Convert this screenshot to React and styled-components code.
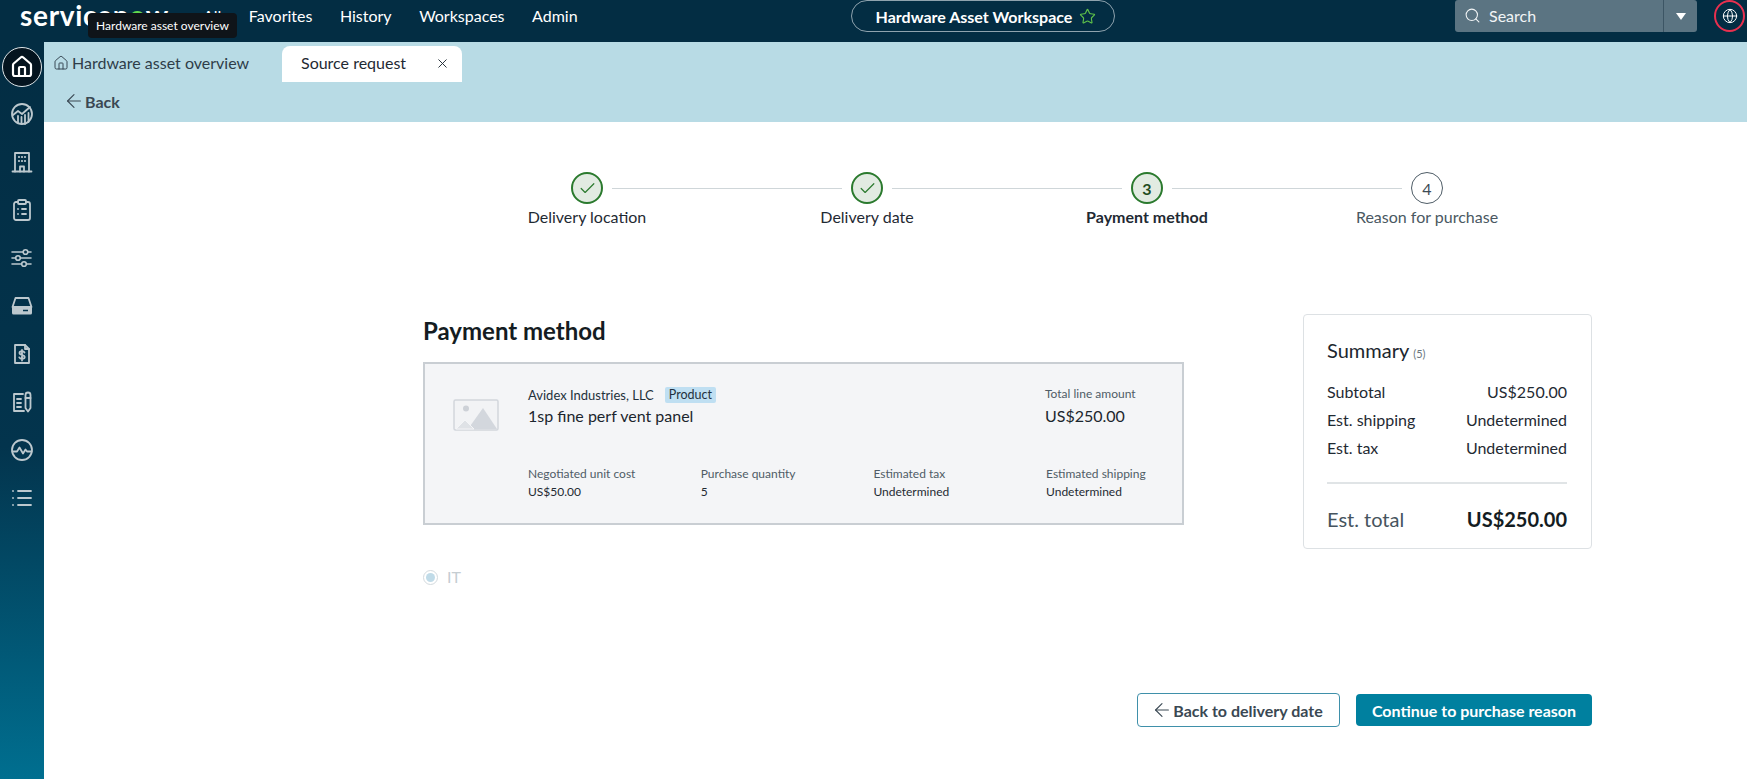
import React from 'react';
import styled, { createGlobalStyle } from 'styled-components';
import { House, ClipboardList, Search, Globe, Star, X, ArrowLeft, Check, List } from 'lucide-react';

const Global = createGlobalStyle`
  html, body { margin: 0; padding: 0; background: #fff; }
  body { font-family: Lato, "Open Sans", sans-serif; color: #1f2a33; overflow: hidden; }
  * { box-sizing: border-box; }
`;

const Page = styled.div`display: flex; flex-direction: column; width: 1747px; height: 779px; overflow: hidden;`;

const TopBar = styled.header`display: flex; align-items: flex-start; height: 42px; background: #032d43; color: #fff; position: relative; flex: none;`;
const LeftGroup = styled.div`display: flex; align-items: center; width: 851px; height: 32px; padding-left: 20px;`;
const Logo = styled.div`font: 700 28px/32px Lato, sans-serif; letter-spacing: 0.7px; width: 183px; flex: none; white-space: nowrap; margin-top: -3px;`;
const Green = styled.span`color: #62d84e;`;
const Nav = styled.nav`display: flex; gap: 27.5px; font-size: 16px; margin-top: -1px;`;
const NavItem = styled.span`white-space: nowrap;`;
const Tooltip = styled.div`position: absolute; left: 88px; top: 13px; width: 149px; height: 25px; background: #0f1419; color: #fff; border-radius: 4px; font-size: 12px; line-height: 25px; text-align: center; white-space: nowrap;`;
const Pill = styled.div`display: flex; align-items: center; justify-content: center; gap: 7px; width: 264px; height: 32px; padding-left: 6px; border: 1px solid #8fa3ae; border-radius: 16px; font-size: 16px; font-weight: 700; flex: none;`;
const Spacer = styled.div`flex: 1;`;
const SearchBox = styled.div`display: flex; width: 242px; height: 32px; background: #5b7482; border-radius: 3px; flex: none;`;
const SearchField = styled.div`display: flex; align-items: center; gap: 8px; flex: 1; padding: 0 0 2px 9px; font-size: 16px; color: #f2f5f6;`;
const SearchCaret = styled.div`display: flex; align-items: center; justify-content: center; width: 34px; border-left: 1px solid #3c5564;`;
const Caret = styled.span`width: 0; height: 0; border-left: 5.5px solid transparent; border-right: 5.5px solid transparent; border-top: 7px solid #fff;`;
const GlobeRing = styled.div`display: flex; align-items: center; justify-content: center; width: 31px; height: 32px; margin: 0 2px 0 17px; border: 2px solid #e8304f; border-radius: 50%; flex: none;`;

const Body = styled.div`display: flex; flex: 1; min-height: 0;`;
const Sidebar = styled.aside`display: flex; flex-direction: column; align-items: center; width: 44px; padding-top: 4px; background: linear-gradient(180deg, #032d43 0%, #03344d 55%, #006f90 100%); flex: none;`;
const RailItem = styled.div`display: flex; align-items: center; justify-content: center; width: 40px; height: 40px; margin-bottom: 8px; color: #bcc8ce; border-radius: 50%;
  ${p => p.$active && 'background: #04141f; border: 1px solid #dfe6e9; color: #fff; margin-top: 1px; margin-bottom: 7px;'}
`;

const Main = styled.main`display: flex; flex-direction: column; flex: 1; min-width: 0;`;
const SubHeader = styled.div`display: flex; flex-direction: column; height: 80px; background: #b8dbe5; flex: none; padding-top: 4px;`;
const TabRow = styled.div`display: flex; align-items: stretch; height: 36px; padding-left: 9px; color: #2e3d49; font-size: 16px; line-height: 20px;`;
const HomeTab = styled.div`display: flex; align-items: center; gap: 3px; width: 229px; flex: none; padding-bottom: 2px;`;
const ActiveTab = styled.div`display: flex; align-items: center; justify-content: space-between; width: 180px; padding: 0 12px 2px 19px; background: #fff; border-radius: 8px 8px 0 0; color: #1f2a33;`;
const BackLink = styled.div`display: flex; align-items: center; gap: 0; height: 38px; padding-left: 19px; font-size: 16px; font-weight: 700; color: #3a4853;`;

const Content = styled.div`display: flex; flex-direction: column; width: 1169px; margin-left: 379px;`;
const Stepper = styled.div`display: grid; grid-template-columns: repeat(4, 280px); margin: 50px 0 0 24px; width: 1120px;`;
const Step = styled.div`display: flex; flex-direction: column; align-items: center; white-space: nowrap;`;
const StepTrack = styled.div`display: grid; grid-template-columns: 1fr 32px 1fr; align-items: center; width: 100%; height: 32px; margin-bottom: 2px;`;
const Connector = styled.span`height: 1px; background: ${p => (p.$hidden ? 'transparent' : '#cfd6d9')}; ${p => p.$in ? 'margin-right: 9px;' : 'margin-left: 9px;'}`;
const StepCircle = styled.div`display: flex; align-items: center; justify-content: center; width: 32px; height: 32px; border-radius: 50%; font-size: 16px;
  border: ${p => (p.$state === 'todo' ? '1px solid #4f5d67' : '2px solid #2b7a2e')};
  background: ${p => (p.$state === 'todo' ? '#fff' : '#e2ebe2')};
  color: ${p => (p.$state === 'todo' ? '#3e4b55' : '#1f4d22')};
  font-weight: ${p => (p.$state === 'current' ? 700 : 400)};
`;
const StepLabel = styled.div`font-size: 16px; line-height: 22px; color: ${p => (p.$state === 'todo' ? '#4a5862' : '#1f2a33')}; font-weight: ${p => (p.$state === 'current' ? 700 : 400)};`;

const Columns = styled.div`display: grid; grid-template-columns: 761px 289px; justify-content: space-between; margin-top: 87px;`;
const Heading = styled.h1`margin: 0 0 15px; font-size: 24px; line-height: 32px; font-weight: 700; color: #141c22;`;
const Card = styled.section`display: flex; flex-direction: column; height: 163px; background: #f4f5f7; border: 2px solid #c9ced3; padding: 21px 0 0 103px; position: relative;`;
const PlaceholderWrap = styled.div`position: absolute; left: 28px; top: 35px;`;
const CardTop = styled.div`display: flex; justify-content: space-between; padding-right: 29px; height: 67px;`;
const VendorLine = styled.div`display: flex; align-items: center; gap: 11px; font-size: 13px; line-height: 20px; color: #24313b;`;
const Badge = styled.span`display: inline-block; height: 16px; padding: 0 4px; background: #bfdff2; border-radius: 2px; font-size: 12.5px; line-height: 16px; color: #1f3140;`;
const ProductName = styled.div`font-size: 16px; line-height: 22px; color: #1c262e;`;
const Total = styled.div`display: flex; flex-direction: column; width: 108px;`;
const MetaLabel = styled.div`font-size: 12px; line-height: 18px; color: #4f5c66; white-space: nowrap;`;
const TotalValue = styled.div`font-size: 16px; line-height: 24px; color: #1c262e; margin-top: 1px;`;
const MetaGrid = styled.div`display: grid; grid-template-columns: repeat(4, 172.7px); margin-top: 13px;`;
const Meta = styled.div`display: flex; flex-direction: column;`;
const MetaValue = styled.div`font-size: 12px; line-height: 18px; color: #1f2a33;`;

const RadioRow = styled.div`display: flex; align-items: center; gap: 9px; margin-top: 42px; color: #c5cdd2; font-size: 16px; line-height: 20px;`;
const Radio = styled.span`display: flex; align-items: center; justify-content: center; width: 15px; height: 15px; border: 1px solid #d3dade; border-radius: 50%;
  &::after { content: ''; width: 9px; height: 9px; border-radius: 50%; background: #c0dbe8; }
`;

const Summary = styled.aside`height: 235px; margin-top: -1px; border: 1px solid #dde1e4; border-radius: 4px; padding: 22px 24px 0 23px; background: #fff;`;
const SummaryTitle = styled.div`font-size: 20px; line-height: 26px; color: #1c262e; margin-bottom: 11px;`;
const Count = styled.small`font-size: 11px; color: #6a7780; margin-left: 4px;`;
const SumRow = styled.div`display: flex; justify-content: space-between; font-size: 16px; line-height: 28px; color: #1f2a33;`;
const Divider = styled.hr`border: 0; height: 2px; background: #e0e4e6; margin: 20px 0 21px;`;
const TotalRow = styled.div`display: flex; justify-content: space-between; align-items: center; font-size: 20px; line-height: 28px;`;
const TotalLabel = styled.span`color: #46545e;`;
const TotalAmount = styled.strong`font-weight: 700; color: #141c22;`;

const Actions = styled.div`display: flex; justify-content: flex-end; align-items: center; gap: 16px; margin-top: 106px;`;
const BackButton = styled.button`display: flex; align-items: center; justify-content: center; gap: 0; width: 203px; height: 34px; background: #fff; border: 1px solid #3f90aa; border-radius: 4px; font: 700 16px Lato, sans-serif; color: #3a4853; padding: 0 3px 0 0;`;
const PrimaryButton = styled.button`width: 236px; height: 32px; background: #00809f; border: 0; border-radius: 4px; font: 700 16px Lato, sans-serif; color: #fff; padding: 0;`;

const Svg = ({ children, size = 24, sw = 1.8 }) => (
  <svg width={size} height={size} viewBox="0 0 24 24" fill="none" stroke="currentColor" strokeWidth={sw} strokeLinecap="round" strokeLinejoin="round">{children}</svg>
);
const ChartCircle = () => (
  <Svg><circle cx="12" cy="12" r="10" /><path d="M3 13l5-4 4 3 8-7" /><path d="M8 21v-7M11.500 22v-7M15 22v-9M18.500 20v-9" /></Svg>
);
const Tower = () => (
  <Svg><path d="M2.500 21.500h19" /><path d="M5 21.500V3h14v18.500" /><path d="M10 21.500v-5h4v5" /><path d="M9 7h.01M12 7h.01M15 7h.01M9 11h.01M12 11h.01M15 11h.01" strokeWidth="2.200" /></Svg>
);
const Sliders = () => (
  <Svg sw={1.6}><path d="M2 6h19M2 12h19M2 18h19" /><circle cx="15.500" cy="6" r="2.300" fill="#033049" /><circle cx="8" cy="12" r="2.300" fill="#033049" /><circle cx="14" cy="18" r="2.300" fill="#033049" /></Svg>
);
const Drive = () => (
  <svg width="24" height="24" viewBox="0 0 24 24" fill="none">
    <path d="M5.500 4h13l3 9H2.500z" stroke="currentColor" strokeWidth="1.800" strokeLinejoin="round" />
    <path d="M2 13.500a1.500 1.500 0 0 1 1.500-1.500h17a1.500 1.500 0 0 1 1.500 1.500V19a1.500 1.500 0 0 1-1.500 1.500h-17A1.500 1.500 0 0 1 2 19z" fill="currentColor" />
    <path d="M13 16.500h5" stroke="#03344d" strokeWidth="1.500" />
  </svg>
);
const FileDollar = () => (
  <Svg><path d="M5 3h10l4 4v14H5z" /><path d="M15 3v4h4" /><path d="M14.500 10.500c-.5-1-1.500-1.300-2.500-1.300-1.400 0-2.500.7-2.500 1.900 0 2.600 5.200 1.300 5.200 3.900 0 1.200-1.200 1.900-2.700 1.900-1.200 0-2.200-.5-2.700-1.500M12 8v10.500" /></Svg>
);
const NotePen = () => (
  <Svg><path d="M13 4H4v17h10" /><path d="M7 9h4M7 13h4M7 17h4" /><path d="M15.500 5a2.500 2.500 0 0 1 5 0v13l-2.500 3.500-2.500-3.500z" /><path d="M15.500 8h5" /></Svg>
);
const PulseCircle = () => (
  <Svg><circle cx="12" cy="12" r="10" /><path d="M2.500 13.500H7l2.500-4 3.500 6 2.500-4 1.500 2h4.500" /></Svg>
);
const Placeholder = () => (
  <svg width="46" height="32" viewBox="0 0 46 32" fill="none">
    <rect x="1" y="1" width="44" height="30" rx="1.500" fill="#f2f3f5" stroke="#d2d6dc" strokeWidth="1.500" />
    <circle cx="13" cy="9.500" r="3" fill="#cdd1d7" />
    <path d="M15 30L30 9l14 21z" fill="#d3d7dd" />
    <path d="M3 30l9-9 9 9z" fill="#dfe2e6" stroke="#f4f5f7" strokeWidth="1" />
  </svg>
);

const railIcons = [
  <House size={24} strokeWidth={2.2} />,
  <ChartCircle />,
  <Tower />,
  <ClipboardList size={24} strokeWidth={1.8} />,
  <Sliders />,
  <Drive />,
  <FileDollar />,
  <NotePen />,
  <PulseCircle />,
  <List size={24} strokeWidth={1.8} />,
];

const steps = [
  { label: 'Delivery location', state: 'done' },
  { label: 'Delivery date', state: 'done' },
  { label: 'Payment method', state: 'current', n: 3 },
  { label: 'Reason for purchase', state: 'todo', n: 4 },
];

const meta = [
  ['Negotiated unit cost', 'US$50.00'],
  ['Purchase quantity', '5'],
  ['Estimated tax', 'Undetermined'],
  ['Estimated shipping', 'Undetermined'],
];

const sums = [
  ['Subtotal', 'US$250.00'],
  ['Est. shipping', 'Undetermined'],
  ['Est. tax', 'Undetermined'],
];

export default function App() {
  return (
    <Page>
      <Global />
      <TopBar>
        <LeftGroup>
          <Logo>servicen<Green>o</Green>w</Logo>
          <Nav>
            {['All', 'Favorites', 'History', 'Workspaces', 'Admin'].map(n => <NavItem key={n}>{n}</NavItem>)}
          </Nav>
        </LeftGroup>
        <Tooltip>Hardware asset overview</Tooltip>
        <Pill>Hardware Asset Workspace <Star size={17} color="#5fc24a" strokeWidth={1.6} /></Pill>
        <Spacer />
        <SearchBox>
          <SearchField><Search size={17} strokeWidth={1.5} />Search</SearchField>
          <SearchCaret><Caret /></SearchCaret>
        </SearchBox>
        <GlobeRing><Globe size={16} color="#fff" strokeWidth={1.5} /></GlobeRing>
      </TopBar>
      <Body>
        <Sidebar>
          {railIcons.map((icon, i) => <RailItem key={i} $active={i === 0}>{icon}</RailItem>)}
        </Sidebar>
        <Main>
          <SubHeader>
            <TabRow>
              <HomeTab><House size={16} strokeWidth={1.4} />Hardware asset overview</HomeTab>
              <ActiveTab>Source request <X size={15} strokeWidth={1.5} /></ActiveTab>
            </TabRow>
            <BackLink><ArrowLeft size={22} strokeWidth={1.2} />Back</BackLink>
          </SubHeader>
          <Content>
            <Stepper>
              {steps.map((s, i) => (
                <Step key={s.label}>
                  <StepTrack>
                    <Connector $in $hidden={i === 0} />
                    <StepCircle $state={s.state}>{s.n || <Check size={19} strokeWidth={1.5} color="#2b7a2e" />}</StepCircle>
                    <Connector $hidden={i === steps.length - 1} />
                  </StepTrack>
                  <StepLabel $state={s.state}>{s.label}</StepLabel>
                </Step>
              ))}
            </Stepper>
            <Columns>
              <div>
                <Heading>Payment method</Heading>
                <Card>
                  <PlaceholderWrap><Placeholder /></PlaceholderWrap>
                  <CardTop>
                    <div>
                      <VendorLine>Avidex Industries, LLC <Badge>Product</Badge></VendorLine>
                      <ProductName>1sp fine perf vent panel</ProductName>
                    </div>
                    <Total>
                      <MetaLabel>Total line amount</MetaLabel>
                      <TotalValue>US$250.00</TotalValue>
                    </Total>
                  </CardTop>
                  <MetaGrid>
                    {meta.map(([l, v]) => (
                      <Meta key={l}><MetaLabel>{l}</MetaLabel><MetaValue>{v}</MetaValue></Meta>
                    ))}
                  </MetaGrid>
                </Card>
                <RadioRow><Radio />IT</RadioRow>
              </div>
              <Summary>
                <SummaryTitle>Summary<Count>(5)</Count></SummaryTitle>
                {sums.map(([l, v]) => <SumRow key={l}><span>{l}</span><span>{v}</span></SumRow>)}
                <Divider />
                <TotalRow><TotalLabel>Est. total</TotalLabel><TotalAmount>US$250.00</TotalAmount></TotalRow>
              </Summary>
            </Columns>
            <Actions>
              <BackButton><ArrowLeft size={22} strokeWidth={1.2} />Back to delivery date</BackButton>
              <PrimaryButton>Continue to purchase reason</PrimaryButton>
            </Actions>
          </Content>
        </Main>
      </Body>
    </Page>
  );
}
